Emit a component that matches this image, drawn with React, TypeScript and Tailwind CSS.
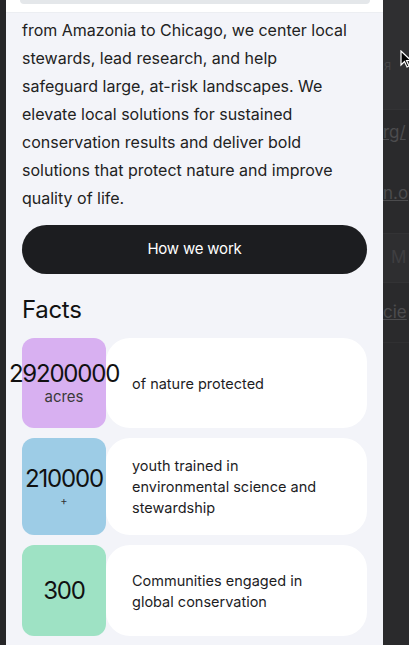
import React from 'react';

type Fact = {
  value: string;
  unit?: string;
  unitSmall?: boolean;
  text: string;
  color: string;
  height: string;
};

const facts: Fact[] = [
  { value: '29200000', unit: 'acres', text: 'of nature protected', color: 'bg-[#d8b0f1]', height: 'h-[90px]' },
  {
    value: '210000',
    unit: '+',
    unitSmall: true,
    text: 'youth trained in environmental science and stewardship',
    color: 'bg-[#9dcce6]',
    height: 'h-[97px]',
  },
  { value: '300', text: 'Communities engaged in global conservation', color: 'bg-[#9ee2c4]', height: 'h-[91px]' },
];

const intro = [
  'from Amazonia to Chicago, we center local',
  'stewards, lead research, and help',
  'safeguard large, at-risk landscapes. We',
  'elevate local solutions for sustained',
  'conservation results and deliver bold',
  'solutions that protect nature and improve',
  'quality of life.',
];

const FactRow: React.FC<{ fact: Fact }> = ({ fact }) => (
  <div className={`flex flex-row ${fact.height}`}>
    <div
      className={`${fact.color} relative z-10 w-[84px] shrink-0 rounded-[12px] flex flex-col items-center justify-center overflow-visible`}>
      <span className="text-[24px] leading-[26px] text-[#111] whitespace-nowrap tracking-[-1.2px]">{fact.value}</span>
      {fact.unit && (
        <span
          className={
            fact.unitSmall
              ? 'text-[11px] leading-[14px] text-[#333] mt-[2px]'
              : 'text-[15px] leading-[18px] text-[#3a3a3a] mt-[1px]'
          }>
          {fact.unit}
        </span>
      )}
    </div>
    <div className="grow bg-white rounded-[24px] flex items-center pl-[26px] pr-[20px]">
      <p className="text-[14.5px] leading-[21px] text-[#1d1d1f] max-w-[200px]">{fact.text}</p>
    </div>
  </div>
);

export default function App() {
  return (
    <div
      className="relative flex flex-row h-[645px] w-[409px] overflow-hidden bg-[#2a2a2c]"
      style={{ fontFamily: 'Inter, "Noto Sans", sans-serif' }}>
      {/* left edge */}
      <div className="w-[6px] shrink-0 bg-[#262628]" />

      {/* panel */}
      <div className="w-[377px] shrink-0 bg-[#f3f4f9] flex flex-col">
        <div className="h-[13px] bg-white border-b border-[#eceef2] pl-[14px] pr-[13px]">
          <div className="h-[4px] bg-[#e4e7ea] rounded-b-[12px]" />
        </div>
        <div className="px-4 flex flex-col">
          <p className="mt-[3px] text-[16px] leading-[28px] text-[#222]">
            {intro.map((line, i) => (
              <span key={i} className="block whitespace-nowrap">
                {line}
              </span>
            ))}
          </p>
          <button className="mt-[13px] h-[49px] rounded-full bg-[#1c1d20] text-white text-[15px] tracking-[-0.2px]">
            How we work
          </button>
          <h2 className="mt-[20px] text-[24px] leading-[32px] text-[#111] tracking-[-0.3px]">Facts</h2>
          <div className="mt-[12px] flex flex-col gap-[10px]">
            {facts.map((f) => (
              <FactRow key={f.value} fact={f} />
            ))}
          </div>
        </div>
      </div>

      {/* dimmed page behind */}
      <div className="grow flex flex-col overflow-hidden text-[#4a4a4c]">
        <div className="h-[110px] bg-[#2f2f31] border-b border-[#333335] relative">
          <span className="absolute left-[1px] top-[56px] text-[13px] text-[#444446]">я</span>
        </div>
        <div className="h-[45px] flex items-center">
          <span className="text-[17px] underline text-[#4c4c4e] whitespace-nowrap">rg/</span>
        </div>
        <div className="h-[78px] flex items-center">
          <span className="text-[17px] underline text-[#4c4c4e] whitespace-nowrap">n.o</span>
        </div>
        <div className="h-[50px] bg-[#2e2e30] border-y border-[#333335] flex items-center pl-[8px]">
          <span className="text-[17px] text-[#3f3f41] whitespace-nowrap">M</span>
        </div>
        <div className="h-[60px] flex items-center border-b border-[#303032]">
          <span className="text-[17px] underline text-[#4c4c4e] whitespace-nowrap">cie</span>
        </div>
      </div>

      {/* cursor */}
      <svg className="absolute left-[400px] top-[50px]" width="12" height="19" viewBox="0 0 12 19">
        <path d="M1 1 L1 15 L4.5 11.5 L7 17 L9 16 L6.5 10.5 L11 10.5 Z" fill="#000" stroke="#fff" strokeWidth="1.2" />
      </svg>
    </div>
  );
}
